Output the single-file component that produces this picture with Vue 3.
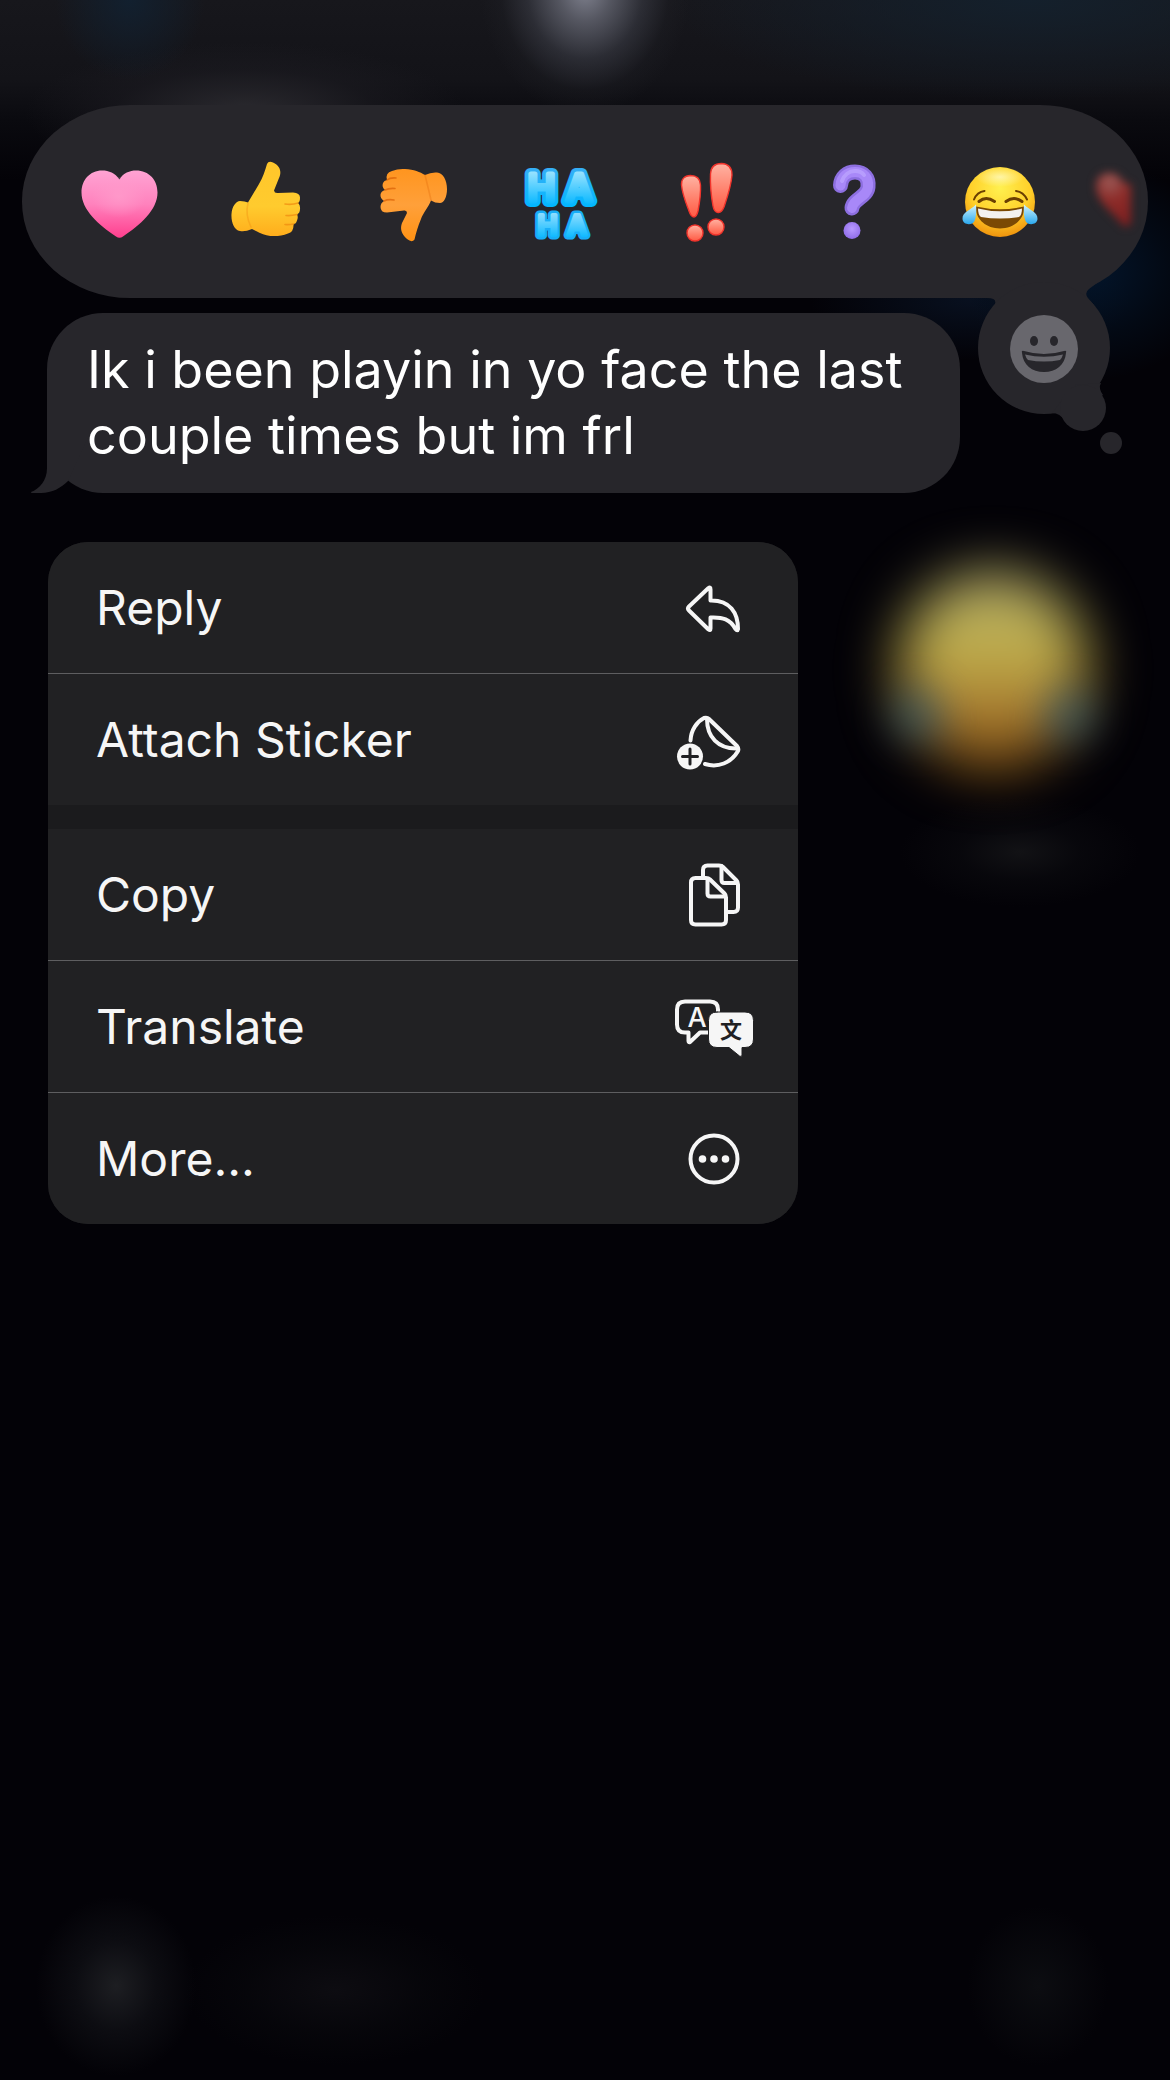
<script setup>
import { ref } from 'vue'

const reactions = [
  { id: 'heart', label: 'Heart' },
  { id: 'up', label: 'Thumbs up' },
  { id: 'down', label: 'Thumbs down' },
  { id: 'haha', label: 'Haha' },
  { id: 'bang', label: 'Exclamation' },
  { id: 'question', label: 'Question' },
  { id: 'joy', label: 'Tears of joy' },
  { id: 'red', label: 'Red heart' },
]

const groups = [
  [
    { id: 'reply', label: 'Reply' },
    { id: 'sticker', label: 'Attach Sticker' },
  ],
  [
    { id: 'copy', label: 'Copy' },
    { id: 'translate', label: 'Translate' },
    { id: 'more', label: 'More...' },
  ],
]

const message = 'Ik i been playin in yo face the last couple times but im frl'

const picked = ref('')
function pick(id) {
  picked.value = picked.value === id ? '' : id
}
</script>

<template>
  <main class="screen">
    <!-- blurred conversation behind the menu -->
    <div class="backdrop" aria-hidden="true">
      <div class="sticker">
        <i class="face"></i>
        <i class="tear left"></i>
        <i class="tear right"></i>
      </div>
    </div>

    <div class="tapback">
      <div class="reactions">
        <button
          v-for="r in reactions"
          :key="r.id"
          class="reaction"
          type="button"
          :aria-label="r.label"
          :aria-pressed="picked === r.id"
          @click="pick(r.id)"
        >
          <svg v-if="r.id === 'heart'" viewBox="0 0 90 90">
            <defs>
              <linearGradient id="pink" x1="0" y1="0" x2="0" y2="1">
                <stop offset="0" stop-color="#ffa3d3" />
                <stop offset="0.5" stop-color="#ff82bd" />
                <stop offset="1" stop-color="#ff3f8e" />
              </linearGradient>
              <radialGradient id="pinkGlow" cx="0.5" cy="0.4" r="0.45">
                <stop offset="0" stop-color="#ff9bcb" stop-opacity="0.8" />
                <stop offset="1" stop-color="#ff9bcb" stop-opacity="0" />
              </radialGradient>
            </defs>
            <path fill="url(#pink)" d="M45.500 22.500C49 16 56 13.500 62 13.500C75 13.500 83.500 23 83.500 35.500C83.500 53 66 68 49 79.500Q45.500 82 42 79.500C25 68 7.500 53 7.500 35.500C7.500 23 16 13.500 28 13.500C35 13.500 41 16 45.500 22.500Z" />
            <ellipse cx="45" cy="44" rx="30" ry="24" fill="url(#pinkGlow)" />
          </svg>

          <svg v-else-if="r.id === 'up'" viewBox="0 0 90 90">
            <defs>
              <linearGradient id="thumbUp" x1="0" y1="0" x2="0" y2="1">
                <stop offset="0" stop-color="#ffc62b" />
                <stop offset="0.6" stop-color="#ffcb2e" />
                <stop offset="1" stop-color="#ffad1c" />
              </linearGradient>
            </defs>
            <path fill="url(#thumbUp)" d="M27 45.500L38 27C42 20 44 14 46 7Q47.500 3.500 52 5.500C60 9 60.500 16 58 21L53 33.500Q53.500 36.500 57 36L72 35.500Q79 36 79 40.500Q79 45 77 46Q79.500 48 79 52Q79 56 76 57.500Q77.500 60 76 63.500Q75 67 72.500 67Q73 75 67 76.500C57 80.500 46 79.500 39 76L31 72Q24 75 19 74C13 73 10 65 10.500 57C11 49 15 44.500 19 44Q24 44 27 45.500Z" />
            <g fill="none" stroke="#f08d10" stroke-width="1.600" stroke-linecap="round" opacity="0.750">
              <path d="M77 46Q71 48 64 47" />
              <path d="M76 57.500Q70 59 65 58.500" />
              <path d="M72.500 67Q68 68 64 67.500" />
              <path d="M27 46Q24 58 30 70" opacity="0.500" />
            </g>
          </svg>

          <svg v-else-if="r.id === 'down'" viewBox="0 0 90 90">
            <defs>
              <linearGradient id="thumbDown" x1="0" y1="0" x2="0" y2="1">
                <stop offset="0" stop-color="#ff951f" />
                <stop offset="0.5" stop-color="#ffa03a" />
                <stop offset="1" stop-color="#ff9214" />
              </linearGradient>
            </defs>
            <path fill="url(#thumbDown)" d="M24 14Q30 11.500 37 12C46 12.500 52 15 57 18Q63 15 69 15.500C75 16 79 23 79 32C79 40 76 46 72 46Q67 46 63 43.500C60 51 55 56 53 62C50 69 48 76 46.500 82.500Q44 86 39 82C33 77 32 71 34 66L39 56Q39 53 36 53.500L19 55.500Q12.500 55.500 12.500 50Q12.500 46 16 44Q12 41 12.500 37.500Q13 34 17 33Q13.500 30 15 26Q16 23.500 19 23Q17 16 24 14Z" />
            <g fill="none" stroke="#dc6308" stroke-width="1.600" stroke-linecap="round" opacity="0.750">
              <path d="M19 23Q22 20.500 28 21" />
              <path d="M17 33Q21 31 27 31.500" />
              <path d="M16 44Q20 42 26 43" />
              <path d="M57 18Q60 30 63 43" opacity="0.400" />
            </g>
          </svg>

          <svg v-else-if="r.id === 'haha'" viewBox="0 0 90 90" class="haha">
            <defs>
              <linearGradient id="sky" gradientUnits="userSpaceOnUse" x1="0" y1="9" x2="0" y2="51">
                <stop offset="0" stop-color="#39aef5" />
                <stop offset="1" stop-color="#00b7ff" />
              </linearGradient>
              <linearGradient id="skyLight" gradientUnits="userSpaceOnUse" x1="0" y1="12" x2="0" y2="46">
                <stop offset="0" stop-color="#a5e6ff" />
                <stop offset="1" stop-color="#0fbaff" />
              </linearGradient>
              <linearGradient id="skyLow" gradientUnits="userSpaceOnUse" x1="0" y1="55" x2="0" y2="80">
                <stop offset="0" stop-color="#95dfff" />
                <stop offset="1" stop-color="#0fbaff" />
              </linearGradient>
            </defs>
            <g text-anchor="middle" stroke-linejoin="round">
              <text x="26.500 64" y="44" font-size="37" fill="url(#sky)" stroke="url(#sky)" stroke-width="12">HA</text>
              <text x="26.500 64" y="44" font-size="37" fill="url(#skyLight)" stroke="url(#skyLight)" stroke-width="5" aria-hidden="true">HA</text>
              <text x="32.500 62" y="78" font-size="27" fill="#18aef8" stroke="#18aef8" stroke-width="9">HA</text>
              <text x="32.500 62" y="78" font-size="27" fill="url(#skyLow)" stroke="url(#skyLow)" stroke-width="4" aria-hidden="true">HA</text>
            </g>
          </svg>

          <svg v-else-if="r.id === 'bang'" viewBox="0 0 90 90">
            <defs>
              <linearGradient id="coral" x1="0" y1="0" x2="0" y2="1">
                <stop offset="0" stop-color="#ffb3a3" />
                <stop offset="0.6" stop-color="#ff7d68" />
                <stop offset="1" stop-color="#ff5a44" />
              </linearGradient>
            </defs>
            <g fill="url(#coral)" stroke="#f0342c" stroke-width="1.400">
              <path d="M19.500 28Q19 19 28.500 18.500Q38 18.500 38.500 28C39 38 37.500 46 36 54Q34.500 60 32 60Q29 60 27 54C24 46 20.500 38 19.500 28Z" />
              <path d="M48.500 17Q49 6.500 59.500 6.500Q70 7 70 18C69 30 65 41 62 50Q59.500 56 56 55.500Q52 55 51 49C49 38 48 28 48.500 17Z" />
              <circle cx="33" cy="76" r="8" />
              <circle cx="54" cy="70" r="8" />
            </g>
          </svg>

          <svg v-else-if="r.id === 'question'" viewBox="0 0 90 90">
            <defs>
              <radialGradient id="violet" cx="0.5" cy="0.4" r="0.6">
                <stop offset="0" stop-color="#b99aff" />
                <stop offset="1" stop-color="#8f6ce8" />
              </radialGradient>
            </defs>
            <g fill="none" stroke-linecap="round">
              <path stroke="#8d6fe0" stroke-width="15" d="M31.500 28.500C32 20 38 15 46 15C55 15 60 21 59 30C58 40 44 42 43 51" />
              <path stroke="#a888f8" stroke-width="10" d="M31.500 28.500C32 20 38 15 46 15C55 15 60 21 59 30C58 40 44 42 43 51" />
              <path stroke="#bda6ff" stroke-width="4" opacity="0.700" d="M33 24C35 18 40 14 46 14C50 14 53 15 55 18" />
            </g>
            <circle cx="43" cy="73.500" r="8.500" fill="url(#violet)" />
          </svg>

          <svg v-else-if="r.id === 'joy'" viewBox="0 0 90 90">
            <defs>
              <radialGradient id="sun" cx="0.5" cy="0.3" r="0.72">
                <stop offset="0" stop-color="#fff04f" />
                <stop offset="0.6" stop-color="#ffd02a" />
                <stop offset="1" stop-color="#ee8f0c" />
              </radialGradient>
              <linearGradient id="tearFill" x1="0" y1="0" x2="0" y2="1">
                <stop offset="0" stop-color="#d5f6ff" />
                <stop offset="1" stop-color="#2aa8ee" />
              </linearGradient>
              <radialGradient id="shine">
                <stop offset="0" stop-color="#fffbd0" stop-opacity="0.7" />
                <stop offset="1" stop-color="#fffbd0" stop-opacity="0" />
              </radialGradient>
            </defs>
            <circle cx="44" cy="45" r="35" fill="url(#sun)" />
            <ellipse cx="44" cy="20" rx="24" ry="10" fill="url(#shine)" />
            <path fill="#7a4904" d="M20 49.500Q44 55 68 49.500C69 62 58 71.500 44 71.500C30 71.500 19 62 20 49.500Z" />
            <path fill="#f3f1ef" d="M22 51.500Q44 57 66 51.500Q66 58 63 60Q44 63 25 60Q22 58 22 51.500Z" />
            <g fill="none" stroke="#6b3f02" stroke-linecap="round">
              <path stroke-width="3" d="M23 44.500Q30 38.500 38.500 44.500M50 44.500Q58 38.500 66 44.500" />
              <path stroke-width="2" d="M18 42.500Q21 35 28.500 34M60 34Q67.500 35 71 42.500" />
            </g>
            <path fill="url(#tearFill)" d="M20 47.500Q21 58 18.500 64C16 69 7 68 6.500 62C6 55 15 53 20 47.500Z" />
            <path fill="url(#tearFill)" d="M68 47.500Q67 58 69.500 64C72 69 81 68 81.500 62C82 55 73 53 68 47.500Z" />
          </svg>

          <svg v-else viewBox="0 0 90 90" class="fading">
            <defs>
              <radialGradient id="redFade" gradientUnits="userSpaceOnUse" cx="7" cy="25" r="52">
                <stop offset="0" stop-color="#9a5a57" />
                <stop offset="0.35" stop-color="#8d2c29" />
                <stop offset="1" stop-color="#7a1b1d" />
              </radialGradient>
            </defs>
            <path fill="url(#redFade)" d="M-7 29C-7 19 1 15 9 16Q16 17 20 25L28 28V66Q23 73 18 66C8 54 -7 44 -7 29Z" />
          </svg>
        </button>
      </div>

      <!-- thought-bubble tail with the emoji picker -->
      <button class="picker" type="button" aria-label="Choose emoji">
        <svg viewBox="0 0 160 180">
          <g fill="#27262b">
            <path d="M8 18H17Q27 18 25 24L40 50L110 50L124 25L118 18Q114 13 119 9L127 3V0H8Z" />
            <circle cx="74" cy="68" r="66" />
            <path d="M82 133Q90 133 95 141L112 125L100 110Z" />
            <path d="M131 103Q128 108 133 115L113 125L105 105Z" />
            <circle cx="113" cy="128" r="23" />
            <circle cx="141" cy="163" r="11" />
          </g>
          <circle cx="74" cy="69" r="34" fill="#68676d" />
          <g fill="#27262b">
            <ellipse cx="64" cy="61" rx="4" ry="5" />
            <ellipse cx="84" cy="61" rx="4" ry="5" />
            <path d="M52 73Q51 70 54 71Q74 77 94 71Q97 70 96 73C95 85 86 92 74 92C62 92 53 85 52 73Z" />
          </g>
          <path fill="#68676d" d="M55 74.500Q74 79 93 74.500Q92 78 90 80Q74 83 58 80Q56 78 55 74.500Z" />
        </svg>
      </button>
    </div>

    <div class="bubble">
      <p>{{ message }}</p>
      <svg class="tail" viewBox="0 0 60 60" aria-hidden="true">
        <path d="M17 0V35C17 48 9 56 1 59Q0 60 4 60H11C22 60 31 55 38 48L60 0Z" />
      </svg>
    </div>

    <nav class="menu" aria-label="Message actions">
      <div v-for="(group, i) in groups" :key="i" class="group">
        <button v-for="item in group" :key="item.id" type="button" class="item">
          <span>{{ item.label }}</span>

          <svg v-if="item.id === 'reply'" viewBox="0 0 84 72">
            <path d="M39.500 17.500V28.500C59 28 67 41 67 57Q66.500 59.500 64.500 57C59 47 52 45 39.500 45.500V56.500Q39.500 59 37.500 57.500L18 38.500Q16 36.500 18 34.500L37.500 16Q39.500 14.500 39.500 17.500Z" />
          </svg>

          <svg v-else-if="item.id === 'sticker'" viewBox="0 0 84 72">
            <path d="M19.500 36.500C20 26 26 17.500 33 14Q36 13 38 15L66 42Q68 44.500 67 47C60 59 47 64 34 60" />
            <path d="M36 15C36 33 47 45 66 44.500" />
            <circle class="solid" cx="19" cy="52.500" r="13" />
            <path class="dark" d="M19 45V60M11.500 52.500H26.500" />
          </svg>

          <svg v-else-if="item.id === 'copy'" viewBox="0 0 84 72">
            <path d="M32 18V11Q32 6.500 36.500 6.500H48Q50.500 6.500 52 8L65.500 21.500Q67 23 67 25.500V48.500Q67 53 62.500 53H56" />
            <path d="M50.500 7V21Q50.500 24 53.500 24H66" />
            <path d="M24.500 19H35Q37.500 19 39 20.500L53.500 34.500Q55 36 55 38.500V61Q55 65.500 50.500 65.500H24.500Q20 65.500 20 61V23.500Q20 19 24.500 19Z" />
            <path d="M36.500 20V34.500Q36.500 37.500 39.500 37.500H54" />
          </svg>

          <svg v-else-if="item.id === 'translate'" viewBox="0 0 84 72">
            <path d="M14 10.500H39Q47 10.500 47 18.500V34Q47 41.500 39 41.500H29L19 51Q17.500 51.500 17.500 50V41.500H14Q6 41.500 6 33.500V18.500Q6 10.500 14 10.500Z" />
            <text class="latin" x="26" y="36" font-size="27">A</text>
            <path class="solid cut" d="M46 21H74Q82.500 21 82.500 29.500V48Q82.500 56.500 74 56.500H71V64Q71 66.500 68.500 65L58 56.500H46Q37.500 56.500 37.500 48V29.500Q37.500 21 46 21Z" />
            <text class="han" x="60" y="47" font-size="22">文</text>
          </svg>

          <svg v-else viewBox="0 0 84 72">
            <circle cx="43" cy="36" r="23.500" />
            <g class="solid">
              <circle cx="31.500" cy="36" r="3.800" />
              <circle cx="43" cy="36" r="3.800" />
              <circle cx="54.500" cy="36" r="3.800" />
            </g>
          </svg>
        </button>
      </div>
    </nav>
  </main>
</template>

<style>
body {
  margin: 0;
  background: #030207;
}
</style>

<style scoped>
.screen {
  position: relative;
  box-sizing: border-box;
  min-height: 100vh;
  padding: 105px 22px 48px;
  overflow: hidden;
  background: #030207;
  color: #fff;
  font-family: Inter, 'Liberation Sans', 'Noto Sans CJK SC', sans-serif;
}
button {
  padding: 0;
  border: 0;
  background: none;
  color: inherit;
  font: inherit;
  cursor: pointer;
}
svg {
  display: block;
}

.backdrop {
  position: absolute;
  inset: 0;
  background:
    radial-gradient(105px 125px at 50% -10px, #7f818e 0%, #6a6c78c0 25%, #42444e80 55%, #24252b40 80%, transparent 100%),
    radial-gradient(75px 80px at 130px 0, #12202f 0%, transparent 100%),
    radial-gradient(360px 100px at 88% 0, #14202c 0%, transparent 100%),
    radial-gradient(220px 70px at 245px 112px, #2b2a2f 0%, #1d1c2280 60%, transparent 100%),
    radial-gradient(130px 110px at calc(100% - 80px) 270px, #03152b 0%, #03102080 60%, transparent 100%),
    radial-gradient(160px 60px at 970px 300px, #08101f 0%, transparent 100%),
    radial-gradient(120px 55px at calc(100% - 150px) 852px, #121215 0%, #0c0c1080 50%, transparent 100%),
    radial-gradient(80px 90px at 116px calc(100% - 94px), #1d1e22 0%, #14151a90 50%, transparent 100%),
    radial-gradient(150px 75px at 335px calc(100% - 90px), #0d0c11 0%, #08080c90 60%, transparent 100%),
    radial-gradient(70px 80px at calc(100% - 132px) calc(100% - 94px), #0c0d11 0%, transparent 100%),
    linear-gradient(#17171c 0, #131318 80px, #0a0a0f 120px, #030207 180px);
}
.sticker {
  position: absolute;
  top: 560px;
  right: 82px;
  width: 190px;
  height: 220px;
}
.face {
  position: absolute;
  inset: 10px 0;
  border-radius: 50%;
  background: linear-gradient(#a79f68 0%, #c0b354 32%, #bba341 50%, #a87c35 68%, #85520e 100%);
  filter: blur(28px);
}
.tear {
  position: absolute;
  top: 130px;
  width: 50px;
  height: 50px;
  border-radius: 50%;
  background: #2f6784;
  opacity: 0.6;
  filter: blur(20px);
}
.tear.left {
  left: -6px;
}
.tear.right {
  right: -6px;
}

.tapback {
  position: relative;
}
.reactions {
  display: flex;
  padding: 23px 0 23px 23px;
  overflow: hidden;
  border-radius: 108px / 96px;
  background: #27262b;
}
.reaction {
  display: flex;
  flex: 0 0 147px;
  align-items: center;
  justify-content: center;
  height: 147px;
}
.reaction svg {
  width: 90px;
  height: 90px;
}
.reaction .fading {
  overflow: visible;
  filter: blur(4px);
}
.haha text {
  font-family: Inter, 'Liberation Sans', sans-serif;
  font-weight: 500;
}
.picker {
  position: absolute;
  top: 175px;
  right: 18px;
}
.picker svg {
  width: 160px;
  height: 180px;
}

.bubble {
  position: relative;
  box-sizing: border-box;
  width: fit-content;
  max-width: 913px;
  margin: 15px 0 0 25px;
  padding: 24px 40px;
  border-radius: 56px;
  background: #27262b;
}
.bubble p {
  margin: 0;
  font-size: 52px;
  line-height: 66px;
}
.tail {
  position: absolute;
  bottom: 0;
  left: -17px;
  width: 60px;
  height: 60px;
  fill: #27262b;
}

.menu {
  position: relative;
  display: flex;
  flex-direction: column;
  gap: 24px;
  max-width: 750px;
  margin: 49px 0 0 26px;
  overflow: hidden;
  border-radius: 40px;
  background: #1b1b1d;
}
.group {
  display: flex;
  flex-direction: column;
  background: #212123;
}
.item {
  display: flex;
  align-items: center;
  justify-content: space-between;
  height: 131px;
  padding: 0 43px 0 48px;
  color: #f6f6f6;
  font-size: 48px;
  text-align: left;
}
.item + .item {
  height: 132px;
  border-top: 1px solid #5e5e60;
}
.item svg {
  width: 84px;
  height: 72px;
  fill: none;
  stroke: #f6f6f6;
  stroke-width: 4;
  stroke-linecap: round;
  stroke-linejoin: round;
}
.item .solid {
  fill: #f6f6f6;
  stroke: none;
}
.item .dark {
  stroke: #212123;
  stroke-width: 3;
}
.item .cut {
  stroke: #212123;
  stroke-width: 1;
}
.item text {
  stroke: none;
  text-anchor: middle;
}
.item .latin {
  fill: #f6f6f6;
  font-weight: 500;
}
.item .han {
  fill: #212123;
  font-family: 'Noto Sans CJK SC', sans-serif;
  font-weight: 700;
}
</style>
